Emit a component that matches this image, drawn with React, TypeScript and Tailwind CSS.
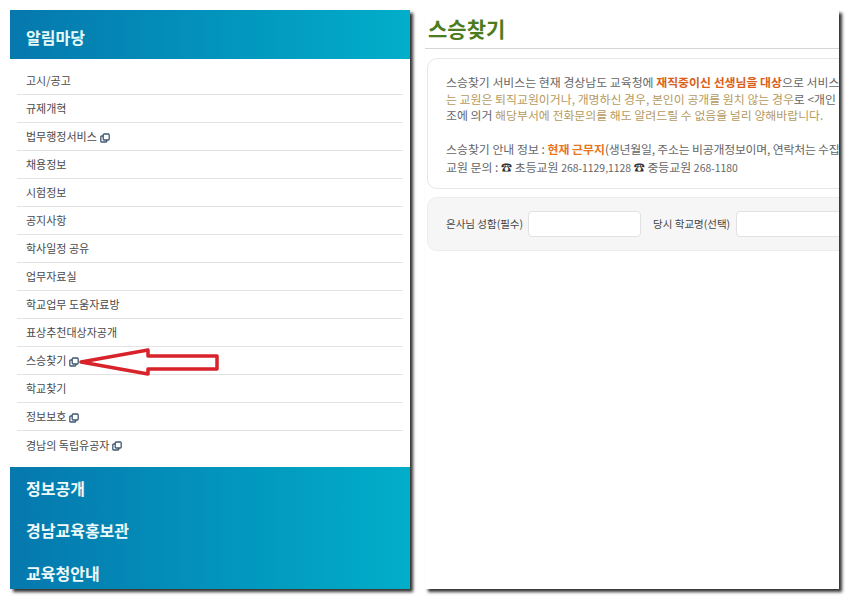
const font = { fontFamily: '"Noto Sans CJK KR", "Liberation Sans", sans-serif' };

function WinIcon() {
  return (
    <svg viewBox="0 0 10 10" className="ml-[3px] mt-[2px] inline-block h-[10px] w-[10px] shrink-0 text-[#3f5870]" fill="none" stroke="currentColor" strokeWidth="1.3">
      <rect x="3.2" y="1" width="6" height="6" rx="1" />
      <path d="M3.2 3H1.6a.8.8 0 0 0-.8.8V8.2a.8.8 0 0 0 .8.8H6a.8.8 0 0 0 .8-.8V7" />
    </svg>
  );
}

const items: [string, boolean][] = [
  ["고시/공고", false],
  ["규제개혁", false],
  ["법무행정서비스", true],
  ["채용정보", false],
  ["시험정보", false],
  ["공지사항", false],
  ["학사일정 공유", false],
  ["업무자료실", false],
  ["학교업무 도움자료방", false],
  ["표상추천대상자공개", false],
  ["스승찾기", true],
  ["학교찾기", false],
  ["정보보호", true],
  ["경남의 독립유공자", true],
];

function Phone() {
  return <span className="text-[11px] text-[#333]">☎</span>;
}

export default function App() {
  return (
    <div className="relative flex h-[600px] w-[850px] items-start gap-[15px] overflow-hidden bg-white p-[10px]" style={font}>
      <div className="flex h-[579px] w-[400px] flex-col overflow-hidden bg-white shadow-[3px_3px_3px_#333]">
        <div className="flex h-[49px] shrink-0 items-center bg-gradient-to-r from-[#0678ad] to-[#02aeca] pl-4 pt-1 text-[16px] font-bold text-[#e6fbf6]">
          알림마당
        </div>
        <ul className="shrink-0 py-2 px-[7px]">
          {items.map(([t, icon], i) => (
            <li
              key={t}
              className={`flex h-[28px] items-center pl-[9px] text-[11px] text-[#4a4a4a] ${i < items.length - 1 ? "border-b border-[#e3e3e3]" : ""}`}
            >
              {t}
              {icon && <WinIcon />}
            </li>
          ))}
        </ul>
        <div className="min-h-0 flex-1 overflow-hidden bg-gradient-to-r from-[#0678ad] to-[#02aeca] pl-4 text-[16px] font-bold text-[#eefafa]">
          <div className="flex h-[41px] items-center">정보공개</div>
          <div className="flex h-[43px] items-center">경남교육홍보관</div>
          <div className="flex h-[38px] items-center pt-[5px]">교육청안내</div>
        </div>
      </div>

      <div className="h-[579px] w-[414px] overflow-hidden bg-white shadow-[3px_3px_3px_#333]">
        <div className="flex h-[39px] items-center border-b border-[#d5d5d5] pl-[3px] text-[21px] font-bold text-[#4d7c1e]">
          스승찾기
        </div>
        <div className="ml-[2px] mt-[9px] h-[131px] w-[460px] rounded-[10px] border border-[#e6e6e6] pl-[18px] pt-[15px] text-[11.9px] leading-[16.5px] whitespace-nowrap text-[#666]">
          <p>
            스승찾기 서비스는 현재 경상남도 교육청에 <b className="text-[#d9601a]">재직중이신 선생님을 대상</b>으로 서비스
          </p>
          <p>
            <span className="text-[#b59a5e]">는 교원은 퇴직교원이거나, 개명하신 경우, 본인이 공개를 원치 않는 경우</span>로 &lt;개인
          </p>
          <p>
            조에 의거 <span className="text-[#b59a5e]">해당부서에 전화문의를 해도 알려드릴 수 없음을 널리 양해바랍니다.</span>
          </p>
          <p className="mt-[17px]">
            스승찾기 안내 정보 : <b className="text-[#e8751f]">현재 근무지</b>
            <span className="tracking-[-0.2px]">(생년월일, 주소는 비공개정보이며, 연락처는 수집</span>
          </p>
          <p className="mt-[2px] text-[#666]">
            교원 문의 : <Phone /> 초등교원 <span className="text-[10.4px]">268-1129,1128</span> <Phone /> 중등교원 <span className="text-[10.4px]">268-1180</span>
          </p>
        </div>
        <div className="ml-[2px] mt-[8px] flex h-[54px] w-[460px] items-center rounded-[10px] border border-[#ececec] bg-[#f6f6f6] pl-[18px] text-[10.5px] text-[#444]">
          <span>은사님 성함(필수)</span>
          <div className="ml-[5px] h-[26px] w-[113px] rounded-[4px] border border-[#e2e2e2] bg-white" />
          <span className="ml-[12px]">당시 학교명(선택)</span>
          <div className="ml-[6px] h-[26px] w-[113px] rounded-[4px] border border-[#e2e2e2] bg-white" />
        </div>
      </div>

      <svg className="absolute left-0 top-0 h-[600px] w-[850px]" viewBox="0 0 850 600" fill="none">
        <path d="M81 362L148 350V356H217V369H148V374Z" stroke="#d8232a" strokeWidth="3.5" strokeLinejoin="round" />
      </svg>
    </div>
  );
}
